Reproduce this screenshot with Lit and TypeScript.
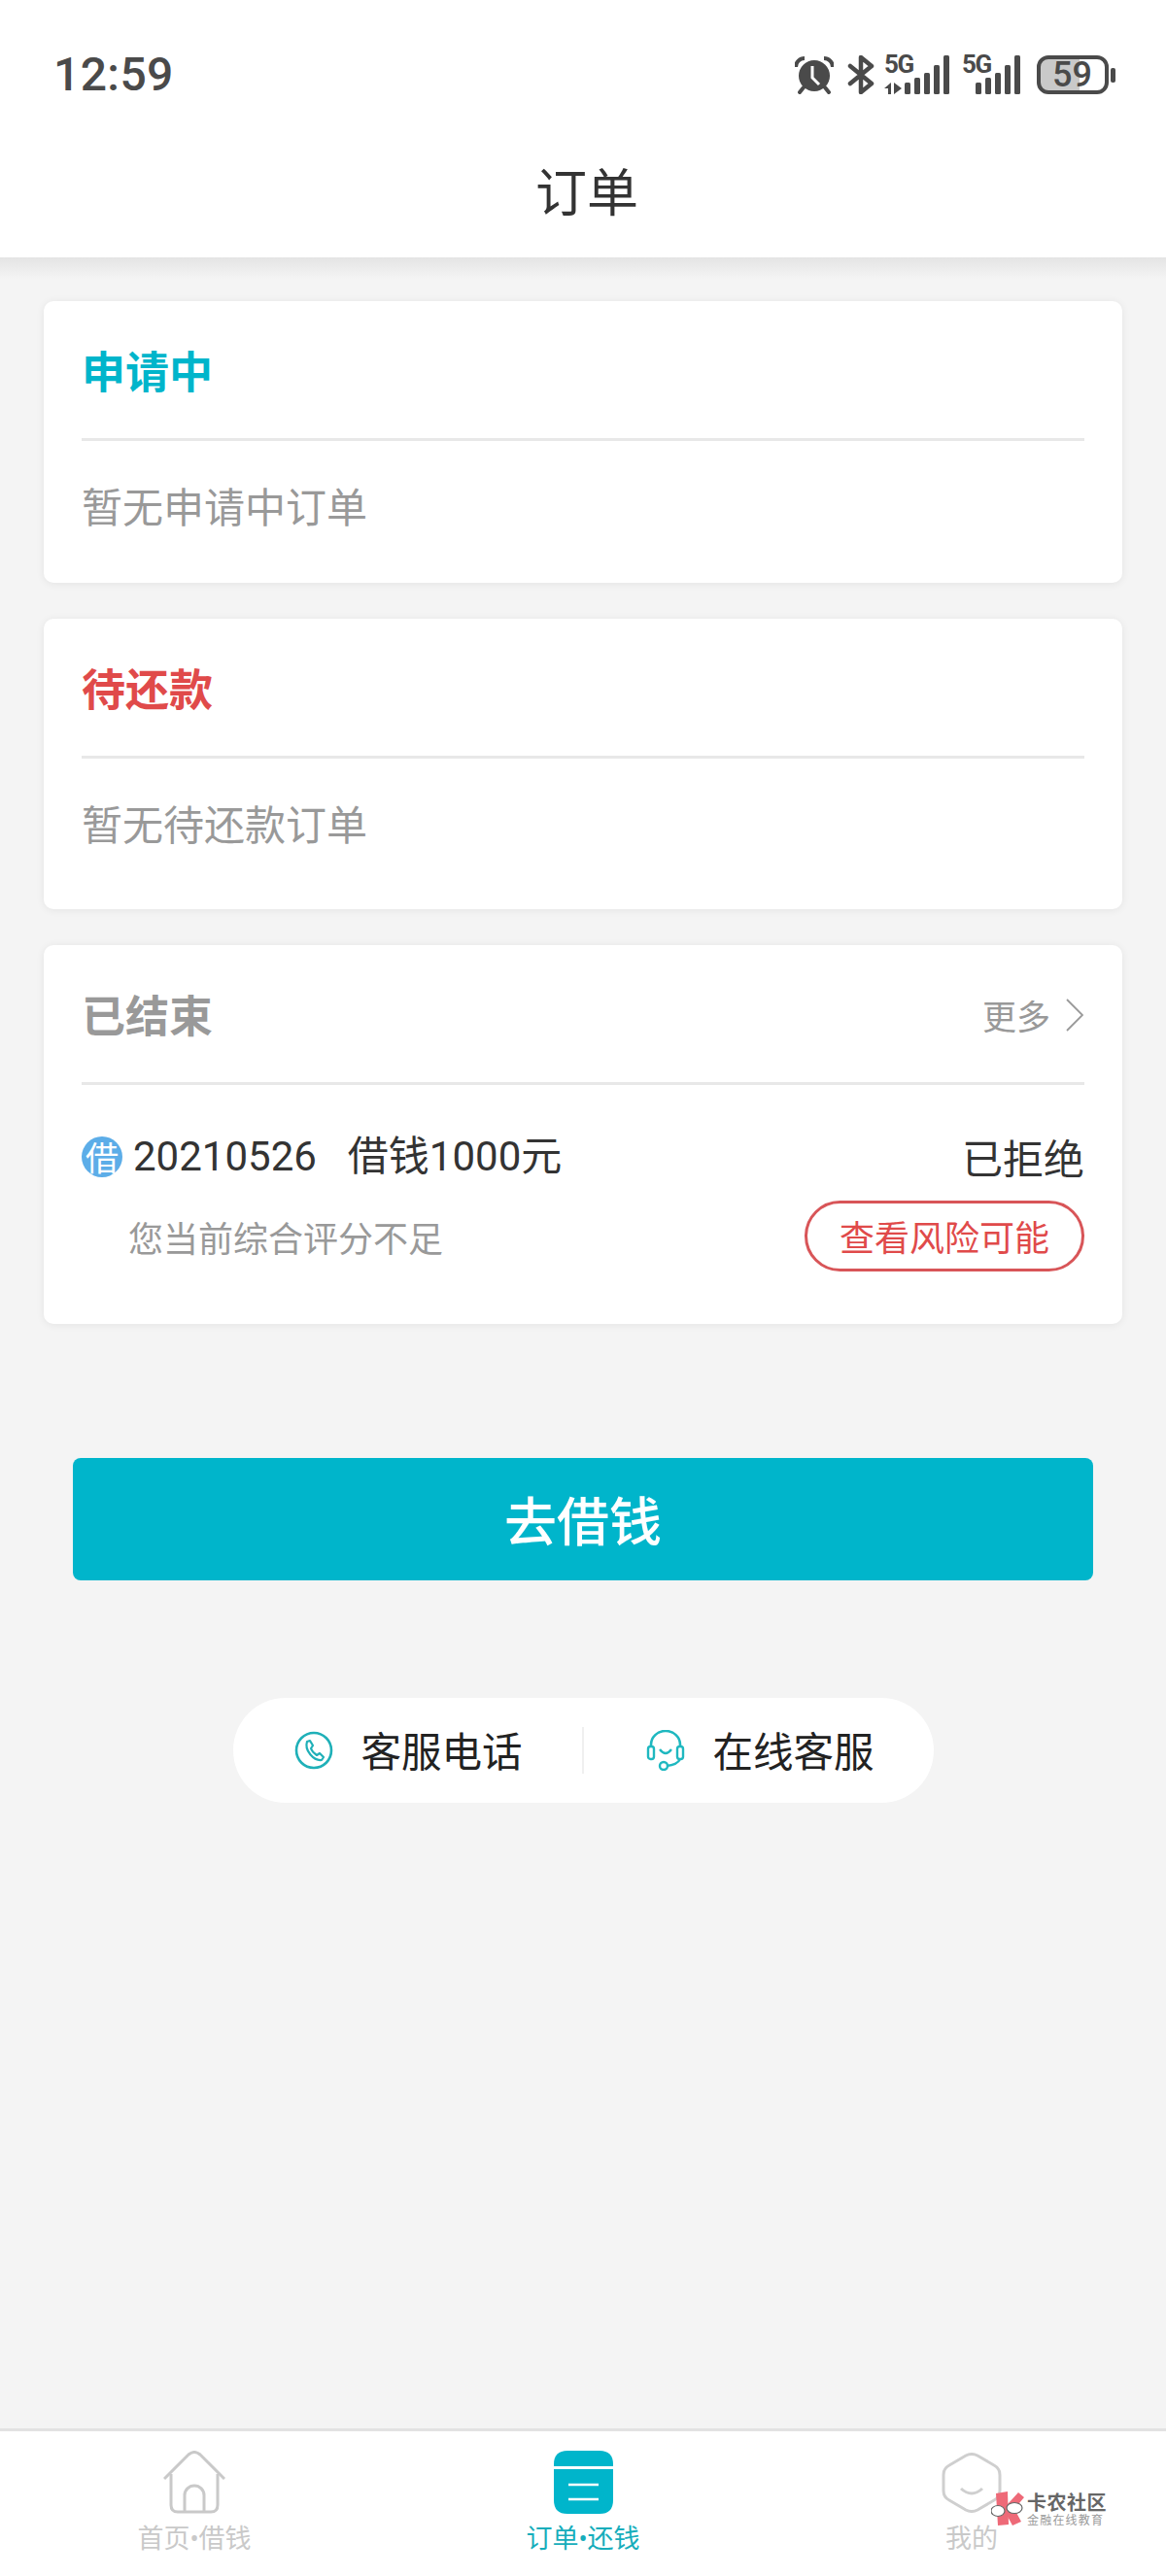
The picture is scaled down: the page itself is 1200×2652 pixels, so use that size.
import { LitElement, html, css, svg } from "lit";
import { customElement } from "lit/decorators.js";

const G = "#4a4a4a";

const alarm = html`<svg class="ic" width="40" height="40" viewBox="0 0 40 40">
  <circle cx="20" cy="21" r="16" fill="${G}"/>
  <path d="M1 12 A9 9 0 0 1 10 3" fill="none" stroke="${G}" stroke-width="4"/>
  <path d="M39 12 A9 9 0 0 0 30 3" fill="none" stroke="${G}" stroke-width="4"/>
  <path d="M9 33 L5 38 M31 33 L35 38" stroke="${G}" stroke-width="4" stroke-linecap="round"/>
  <path d="M18 11 V23 L25 30" fill="none" stroke="#fff" stroke-width="3"/>
</svg>`;
const bt = html`<svg class="ic" width="28" height="40" viewBox="0 0 28 40">
  <path d="M3 11 L25 29 L14 38 V2 L25 11 L3 29" fill="none" stroke="${G}" stroke-width="4.5" stroke-linejoin="round" stroke-linecap="round"/>
</svg>`;
const bars = (xs: number[]) => {
  const tops = [28, 23, 18, 10, 0];
  return xs.map((x, i) => svg`<rect x="${x}" y="${tops[i]}" width="6" height="${40 - tops[i]}" rx="1.5" fill="${G}"/>`);
};
const sig1 = html`<svg class="ic" width="68" height="47" viewBox="0 -7 68 47">
  <text x="0" y="18" class="g5">5G</text>
  <path d="M0 34 L7 28 V40 H4 V34 Z M10 28 L18 34 L10 40 Z" fill="${G}"/>
  ${bars([21, 31, 41, 51, 61])}
</svg>`;
const sig2 = html`<svg class="ic" width="60" height="47" viewBox="0 -7 60 47">
  <text x="0" y="18" class="g5">5G</text>
  ${bars([14, 24, 34, 44, 54])}
</svg>`;
const battery = html`<svg class="ic" width="81" height="40" viewBox="0 0 81 40">
  <rect x="4" y="4" width="40" height="32" fill="#c9c9c9"/>
  <rect x="2" y="2" width="70" height="36" rx="10" fill="none" stroke="${G}" stroke-width="4"/>
  <rect x="76" y="13" width="5" height="15" rx="2" fill="${G}"/>
  <text x="16" y="32" class="bat">59</text>
</svg>`;

const chevron = html`<svg class="chev" width="18" height="34" viewBox="0 0 18 34">
  <path d="M1 1 L17 17 L1 33" fill="none" stroke="#999" stroke-width="1.8"/>
</svg>`;

const phone = html`<svg width="40" height="40" viewBox="0 0 40 40">
  <circle cx="20" cy="20" r="18" fill="none" stroke="#1fb0b8" stroke-width="2.6"/>
  <path d="M13 11 L16 10 L19 15 L17 18 C18 21 20 23 23 25 L26 23 L30 27 L28 30 C20 31 10 20 13 11 Z" fill="none" stroke="#1fb0b8" stroke-width="2.2" stroke-linejoin="round"/>
</svg>`;
const headset = html`<svg width="40" height="42" viewBox="0 0 40 42">
  <path d="M5 17 V15 A15 14 0 0 1 35 15 V17" fill="none" stroke="#1fb8c0" stroke-width="2.6"/>
  <rect x="2" y="17" width="6" height="13" rx="2.5" fill="none" stroke="#1fb8c0" stroke-width="2.4"/>
  <rect x="32" y="17" width="6" height="13" rx="2.5" fill="none" stroke="#1fb8c0" stroke-width="2.4"/>
  <path d="M14 20 Q20 28 26 20" fill="none" stroke="#1fb8c0" stroke-width="2.4"/>
  <path d="M35 30 Q32 36 21 37" fill="none" stroke="#1fb8c0" stroke-width="2.4"/>
  <circle cx="18" cy="37" r="4" fill="none" stroke="#1fb8c0" stroke-width="2.4"/>
</svg>`;

const home = html`<svg width="64" height="65" viewBox="0 0 64 65">
  <path d="M1 29 L26 4 Q32 -1 38 4 L63 29" fill="none" stroke="#c9c9c9" stroke-width="3"/>
  <path d="M8 24 V56 Q8 63 15 63 H49 Q56 63 56 56 V24" fill="none" stroke="#c9c9c9" stroke-width="3"/>
  <path d="M22 63 V46 A10 10 0 0 1 42 46 V63" fill="none" stroke="#c9c9c9" stroke-width="3"/>
</svg>`;
const orders = html`<svg width="61" height="65" viewBox="0 0 61 65">
  <path d="M0 14 Q0 0 14 0 H47 Q61 0 61 14 V16 H0 Z" fill="#00b5cb"/>
  <path d="M0 19 H61 V51 Q61 65 47 65 H14 Q0 65 0 51 Z" fill="#00b5cb"/>
  <path d="M15 35 H46 M15 50 H46" stroke="#fff" stroke-width="2.6"/>
</svg>`;
const face = html`<svg width="62" height="62" viewBox="0 0 62 62">
  <path d="M25 3 Q31 0 37 3 L54 13 Q60 16 60 23 V39 Q60 46 54 49 L37 59 Q31 62 25 59 L8 49 Q2 46 2 39 V23 Q2 16 8 13 Z" fill="none" stroke="#cfcfcf" stroke-width="3"/>
  <path d="M20 37 Q31 47 42 37" fill="none" stroke="#cfcfcf" stroke-width="3"/>
</svg>`;
const kLogo = html`<svg width="34" height="36" viewBox="0 0 34 36">
  <path d="M5 2 L17 0 L18 34 L7 35 Z" fill="#ee6a78"/>
  <path d="M17 13 L28 1 L34 6 L24 18 L31 31 L22 35 L16 24 Z" fill="#ee6a78"/>
  <ellipse cx="7" cy="20" rx="7" ry="5.5" fill="#fff" stroke="#666" stroke-width="1.2"/>
  <ellipse cx="24" cy="17" rx="8" ry="5.5" fill="#fff" stroke="#666" stroke-width="1.2"/>
</svg>`;

@customElement("app-root")
export class AppRoot extends LitElement {
  static styles = css`
    :host { display: block; position: relative; width: 1200px; height: 2652px; font-family: "Noto Sans CJK SC", "Noto Sans", sans-serif; }
    .page { display: flex; flex-direction: column; height: 2652px; background: #f4f4f4; }
    .top { height: 265px; background: #fff; display: flex; flex-direction: column; flex: none; }
    .status { flex: none; height: 153px; box-sizing: border-box; padding: 0 52px 0 55px; display: flex; align-items: center; }
    .time { font: 500 48px/48px Roboto, sans-serif; color: #4a4a4a; letter-spacing: 0.4px; flex: 1; }
    .icons { display: flex; align-items: flex-end; height: 40px; }
    .ic { display: block; flex: none; }
    .ic.gapb { margin-left: 14px; }
    .ic.gaps { margin-left: 10px; }
    .ic.gap2 { margin-left: 12px; }
    .ic.gap3 { margin-left: 17px; }
    .g5 { font: 700 26px Roboto, sans-serif; letter-spacing: -1.5px; fill: #4a4a4a; }
    .bat { font: 500 36px Roboto, sans-serif; fill: #4a4a4a; }
    .title { margin-top: 7px; text-align: center; font-size: 53px; line-height: 70px; color: #333; padding-left: 8px; }
    .shadow { height: 22px; flex: none; background: linear-gradient(#e4e4e4, #f4f4f4); margin-bottom: 23px; }
    .main { flex: 1; display: flex; flex-direction: column; padding: 0 45px; }
    .card { background: #fff; border-radius: 10px; box-shadow: 0 1px 8px rgba(0,0,0,.07); padding: 0 39px; margin-bottom: 37px; }
    .card.last { margin-bottom: 0; }
    .head { height: 141px; display: flex; align-items: center; justify-content: space-between; border-bottom: 3px solid #e8e8e8; }
    .htitle { font-size: 45px; line-height: 60px; font-weight: 700; padding-top: 1px; }
    .teal { color: #00b5cb; }
    .red { color: #e04a4a; }
    .grey { color: #999; }
    .more { display: flex; align-items: center; font-size: 35px; line-height: 40px; color: #999; gap: 16px; padding-top: 3px; margin-right: 1px; }
    .chev { display: block; }
    .empty { font-size: 42px; line-height: 60px; color: #999; padding-top: 36px; }
    .e1 { padding-bottom: 50px; }
    .e2 { padding-bottom: 59px; }
    .row1 { display: flex; align-items: center; justify-content: space-between; margin-top: 51px; height: 46px; }
    .left { display: flex; align-items: center; }
    .badge { width: 42px; height: 42px; border-radius: 50%; background: #5cade8; color: #fff; font-size: 34px; line-height: 42px; text-align: center; margin-right: 11px; }
    .date { font: 42px/46px Roboto, "Noto Sans CJK SC", sans-serif; color: #333; }
    .amt { margin-left: 32px; }
    .status-t { font-size: 42px; line-height: 46px; color: #333; }
    .row2 { display: flex; align-items: center; justify-content: space-between; margin-top: 22px; padding-bottom: 54px; }
    .sub { font-size: 36px; line-height: 50px; color: #999; margin-left: 48px; }
    .risk { width: 288px; height: 73px; box-sizing: border-box; border: 3px solid #d85558; border-radius: 37px; color: #e04a4a; font-size: 36px; line-height: 67px; text-align: center; }
    .btn { margin: 138px 30px 0; height: 126px; border-radius: 8px; background: #00b5cb; color: #fff; font-size: 54px; font-weight: 500; line-height: 126px; text-align: center; }
    .pill { margin: 121px auto 0; width: 721px; height: 108px; border-radius: 54px; background: #fff; display: flex; align-items: center; }
    .pitem { flex: 1; display: flex; align-items: center; font-size: 41.5px; line-height: 60px; color: #222; }
    .pitem span { padding-bottom: 3px; }
    .pitem.a { padding-left: 63px; gap: 29px; }
    .pitem.b { padding-left: 64px; gap: 29px; }
    .pdiv { width: 2px; height: 48px; background: #f0f0f0; flex: none; }
    .pitem svg { display: block; flex: none; }
    .nav { flex: none; height: 152px; box-sizing: border-box; border-top: 3px solid #e2e2e2; background: #fff; display: grid; grid-template-columns: 400px 400px 400px; }
    .tab { display: flex; flex-direction: column; align-items: center; font-family: Roboto, "Noto Sans CJK SC", sans-serif; font-size: 27px; line-height: 36px; color: #c9c9c9; padding-top: 20px; }
    .tab.on { color: #16adbb; }
    .iconbox { height: 65px; display: flex; align-items: center; justify-content: center; margin-bottom: 8px; }
    .iconbox svg { display: block; }
    .mark { position: absolute; left: 1020px; top: 2565px; display: flex; align-items: center; gap: 3px; }
    .mark svg { display: block; }
    .m1 { font-size: 20px; line-height: 22px; font-weight: 700; color: #666; letter-spacing: 0.5px; }
    .m2 { font-size: 12px; line-height: 14px; color: #999; letter-spacing: 1.2px; }
  `;

  render() {
    return html`<div class="page">
      <div class="top">
        <div class="status">
          <div class="time">12:59</div>
          <div class="icons">
            ${alarm}
            <span class="ic gapb">${bt}</span>
            <span class="ic gaps">${sig1}</span>
            <span class="ic gap2">${sig2}</span>
            <span class="ic gap3">${battery}</span>
          </div>
        </div>
        <div class="title">订单</div>
      </div>
      <div class="shadow"></div>
      <div class="main">
        <section class="card">
          <div class="head"><div class="htitle teal">申请中</div></div>
          <div class="empty e1">暂无申请中订单</div>
        </section>
        <section class="card">
          <div class="head"><div class="htitle red">待还款</div></div>
          <div class="empty e2">暂无待还款订单</div>
        </section>
        <section class="card last">
          <div class="head">
            <div class="htitle grey">已结束</div>
            <div class="more">更多${chevron}</div>
          </div>
          <div class="row1">
            <div class="left">
              <div class="badge">借</div>
              <div class="date">20210526</div>
              <div class="date amt">借钱1000元</div>
            </div>
            <div class="status-t">已拒绝</div>
          </div>
          <div class="row2">
            <div class="sub">您当前综合评分不足</div>
            <div class="risk">查看风险可能</div>
          </div>
        </section>
        <div class="btn">去借钱</div>
        <div class="pill">
          <div class="pitem a">${phone}<span>客服电话</span></div>
          <div class="pdiv"></div>
          <div class="pitem b">${headset}<span>在线客服</span></div>
        </div>
      </div>
      <nav class="nav">
        <div class="tab"><div class="iconbox">${home}</div>首页•借钱</div>
        <div class="tab on"><div class="iconbox">${orders}</div>订单•还钱</div>
        <div class="tab"><div class="iconbox">${face}</div>我的</div>
      </nav>
      <div class="mark">
        ${kLogo}
        <div>
          <div class="m1">卡农社区</div>
          <div class="m2">金融在线教育</div>
        </div>
      </div>
    </div>`;
  }
}
